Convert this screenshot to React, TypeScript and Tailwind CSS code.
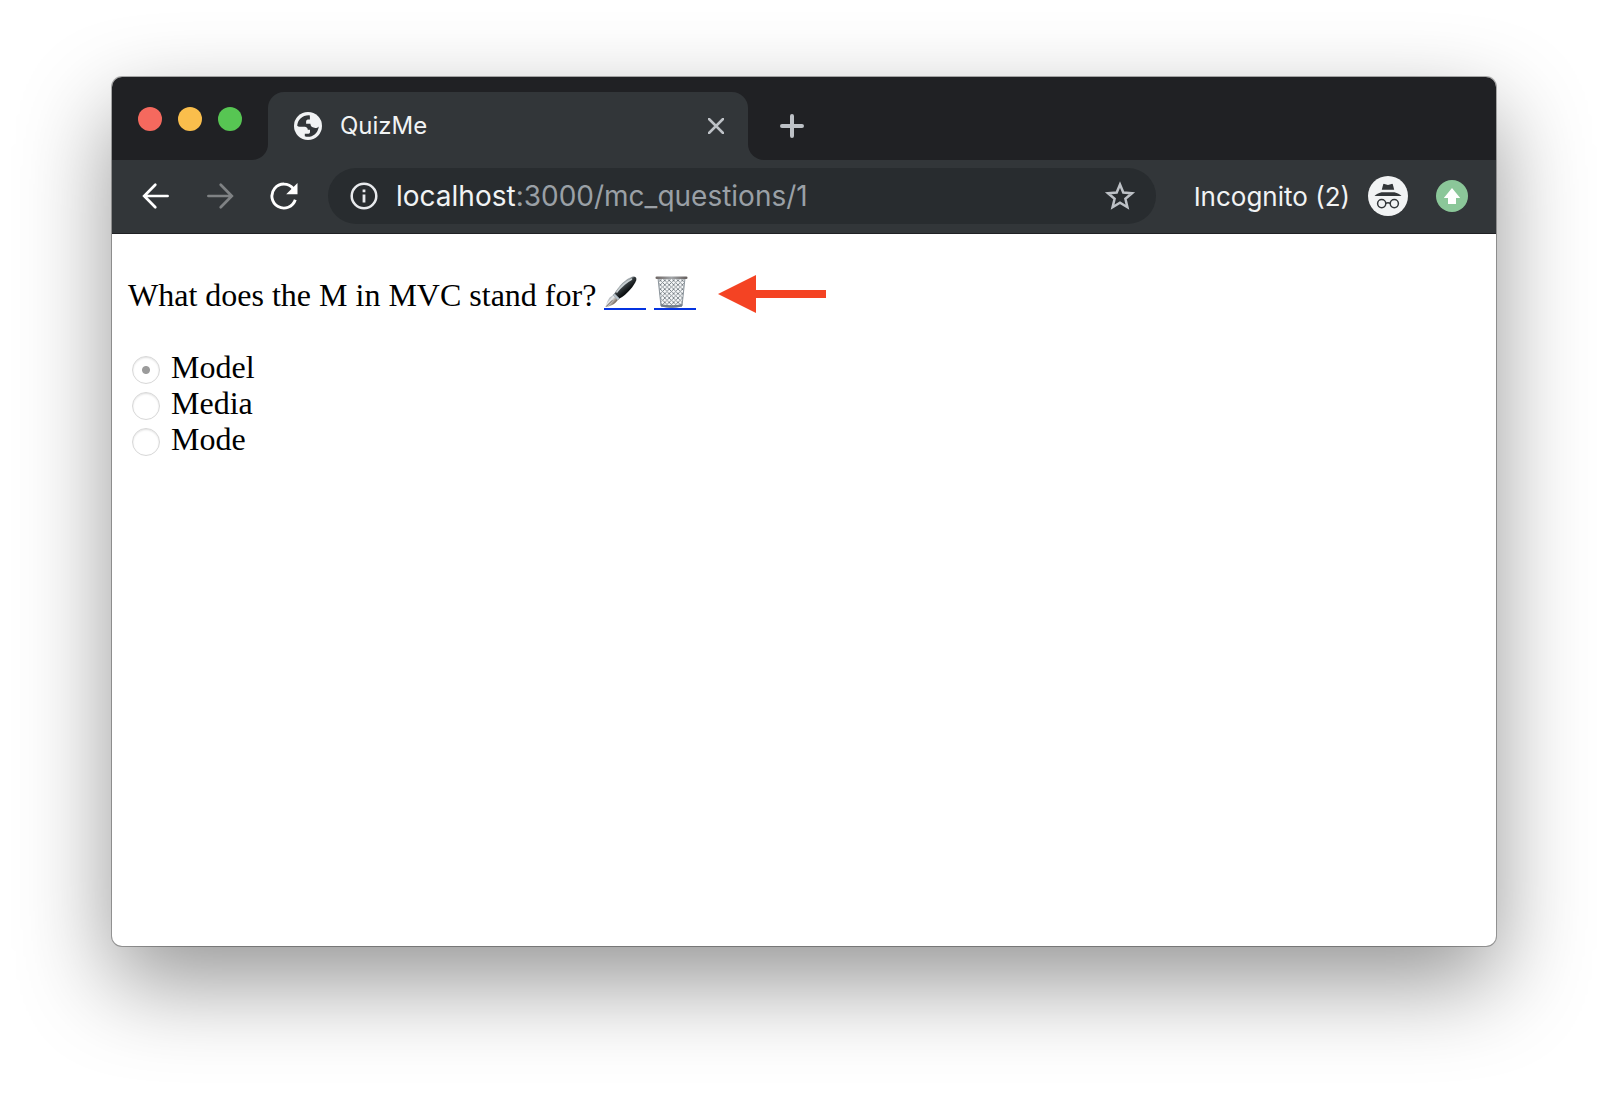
import type { ReactNode } from "react";

const OPTIONS = ["Model", "Media", "Mode"];

function TabFlare({ side }: { side: "left" | "right" }) {
  return (
    <div className="size-4 shrink-0 self-end bg-[#323639]">
      <div className={side === "left" ? "size-4 rounded-br-2xl bg-[#202124]" : "size-4 rounded-bl-2xl bg-[#202124]"} />
    </div>
  );
}

function GlobeIcon() {
  return (
    <svg className="size-7 shrink-0" viewBox="0 0 28 28" aria-hidden="true">
      <circle cx="14" cy="14" r="14" fill="#f1f3f4" />
      <path
        d="M15.700 3.200C9 2.700 3.600 7.300 3.200 13.800c.8.900 2 1.200 3.400.900h4.200c1.700.200 2.900 1.300 3 3h2.200v2.500c-.2 1.100-1.200 1.700-2.700 1.600h-2.500v2.400c5.800 2 13-1.600 14-9.800-1.500 1.700-3.600 1.900-5.300 1.200-2-.7-3.100-2-3.100-3.900h-4.300v-2.200c.1-1.400 1.100-2 2.600-2h1.200V4.700z"
        fill="#323639"
      />
    </svg>
  );
}

function ArrowIcon({ flip = false, color }: { flip?: boolean; color: string }) {
  return (
    <svg className="size-7" viewBox="0 0 28 28" fill="none" stroke={color} strokeWidth="2.700" strokeLinecap="round" aria-hidden="true">
      <path d={flip ? "M2.400 14H25.500M14.700 2.800L25.800 14L14.700 25.200" : "M25.600 14H2.500M13.300 2.800L2.200 14L13.300 25.200"} />
    </svg>
  );
}

function ReloadIcon() {
  return (
    <svg className="size-7" viewBox="0 0 28 28" aria-hidden="true">
      <path d="M23.200 6.500A12 12 0 1 0 25.300 17.800" fill="none" stroke="#fff" strokeWidth="2.900" />
      <path d="M27.500 1v11.300H16.200z" fill="#fff" />
    </svg>
  );
}

function InfoIcon() {
  return (
    <svg className="size-7 shrink-0" viewBox="0 0 28 28" aria-hidden="true">
      <circle cx="14" cy="14" r="12.300" fill="none" stroke="#e8eaed" strokeWidth="2.500" />
      <path d="M12.600 12.600h2.800v8h-2.800zM12.600 7.500h2.800v2.800h-2.800z" fill="#e8eaed" />
    </svg>
  );
}

function StarIcon() {
  return (
    <svg className="size-8" viewBox="0 0 32 32" aria-hidden="true">
      <path
        d="M16 4.500l3.300 8 8.700.700-6.600 5.600 2 8.400L16 22.700l-7.400 4.500 2-8.400L4 13.200l8.700-.700z"
        fill="none"
        stroke="#bdc1c6"
        strokeWidth="2.500"
      />
    </svg>
  );
}

function IncognitoIcon() {
  return (
    <svg className="size-10 shrink-0" viewBox="0 0 40 40" role="img" aria-label="Incognito profile">
      <circle cx="20" cy="20" r="20" fill="#f1f3f4" />
      <g fill="#323639">
        <path d="M15.200 8.300q.300-.700 1.200-.400l3.600 1 3.600-1q.900-.300 1.200.400l1.400 5.500H13.800z" />
        <path d="M13.500 16.300h13c3 .8 5.200 2 7 3.600h-27c1.800-1.600 4-2.800 7-3.600z" />
      </g>
      <g fill="none" stroke="#323639" strokeWidth="1.500">
        <circle cx="13.700" cy="27.600" r="4.100" />
        <circle cx="26.300" cy="27.600" r="4.100" />
        <path d="M17.800 27.300q2.200-1 4.400 0" />
      </g>
    </svg>
  );
}

function UpdateIcon() {
  return (
    <svg className="size-8" viewBox="0 0 32 32" aria-hidden="true">
      <circle cx="16" cy="16" r="16" fill="#8bc799" />
      <path d="M16 8l8.200 10h-4.200v6h-8v-6H7.800z" fill="#fff" />
    </svg>
  );
}

function PenIcon() {
  return (
    <svg className="h-8 w-9" viewBox="0 0 36 32" aria-hidden="true">
      <defs>
        <linearGradient id="pen-body" x1="15" y1="8" x2="22" y2="16" gradientUnits="userSpaceOnUse">
          <stop offset="0" stopColor="#555c61" />
          <stop offset=".25" stopColor="#a9b1b5" />
          <stop offset=".5" stopColor="#33393c" />
          <stop offset="1" stopColor="#0c1012" />
        </linearGradient>
        <linearGradient id="pen-nib" x1="3" y1="22" x2="10" y2="28" gradientUnits="userSpaceOnUse">
          <stop offset="0" stopColor="#6f7780" />
          <stop offset=".45" stopColor="#eceff1" />
          <stop offset="1" stopColor="#75685c" />
        </linearGradient>
      </defs>
      <path d="M10.500 17.500C14 10.500 22.500 2.500 28 .800c3-.900 5 .700 4.200 3.500C30.500 9.500 22.500 19 15.500 22.600z" fill="url(#pen-body)" />
      <path d="M12.500 16.500Q19 7.500 28 3" fill="none" stroke="#c9d0d3" strokeWidth="1.400" />
      <path d="M10.500 17.500l5 5.100-2 1.500-4.600-4.600z" fill="#b8c3cb" stroke="#59636b" strokeWidth=".5" />
      <path d="M8.900 19.500l4.600 4.600c-1.500 3.500-5.500 5.200-10.800 7.100l-1.100-.900c1.400-4.700 3.100-8.800 7.300-10.800z" fill="url(#pen-nib)" />
      <path d="M2 30.700l6.300-6.400" stroke="#534b46" strokeWidth=".8" />
    </svg>
  );
}

function BinIcon() {
  return (
    <svg className="h-8 w-[34px]" viewBox="-2 0 34 32" aria-hidden="true">
      <defs>
        <pattern id="mesh" width="4.400" height="4.400" patternUnits="userSpaceOnUse">
          <path d="M0 0L4.400 4.400M4.400 0L0 4.400" stroke="#747c83" strokeWidth=".85" />
        </pattern>
        <linearGradient id="rim" x1="0" x2="1" y1="0" y2="0">
          <stop offset="0" stopColor="#6d6563" />
          <stop offset=".5" stopColor="#a2a5a8" />
          <stop offset="1" stopColor="#625b59" />
        </linearGradient>
      </defs>
      <path d="M2 2h27l-3 28q-10.500 2.500-21 0z" fill="#f6f8f9" />
      <path d="M2 2h27l-3 28q-10.500 2.500-21 0z" fill="url(#mesh)" stroke="#8b949b" strokeWidth="1" />
      <path d="M4.700 28q10.800 2.500 21.600 0l-.3 2.500q-10.500 2.400-21 0z" fill="#747e88" />
      <rect x="-.5" y=".5" width="32" height="2.600" rx="1.300" fill="url(#rim)" />
    </svg>
  );
}

function EmojiLink({ label, children }: { label: string; children: ReactNode }) {
  return (
    <a href="#" aria-label={label} className="flex w-[42px] border-b-2 border-[#0433e0]">
      {children}
    </a>
  );
}

export default function App() {
  return (
    <main className="flex min-h-screen flex-col bg-white px-28 pt-[77px] pb-[148px]">
      <div className="flex flex-1 flex-col overflow-hidden rounded-[10px] bg-white shadow-[0_0_0_1px_rgba(0,0,0,0.3),0_36px_92px_rgba(0,0,0,0.42)]">
        <header className="font-['Inter',sans-serif]">
          <div className="flex h-[83px] bg-[#202124]">
            <div className="flex gap-4 pt-[30px] pr-2.5 pl-[26px]">
              <button aria-label="Close window" className="size-6 rounded-full bg-[#f5695e]" />
              <button aria-label="Minimize window" className="size-6 rounded-full bg-[#fabe4c]" />
              <button aria-label="Zoom window" className="size-6 rounded-full bg-[#57c653]" />
            </div>
            <TabFlare side="left" />
            <div className="mt-[15px] flex w-[480px] items-center rounded-t-2xl bg-[#323639] pr-6 pl-[26px]">
              <GlobeIcon />
              <span className="ml-[18px] flex-1 text-2xl text-[#f1f3f4]">QuizMe</span>
              <button aria-label="Close tab">
                <svg className="size-4" viewBox="0 0 16 16" stroke="#bdc1c6" strokeWidth="2.500" strokeLinecap="round">
                  <path d="M1 1l14 14M15 1L1 15" />
                </svg>
              </button>
            </div>
            <TabFlare side="right" />
            <button aria-label="New tab" className="mt-[15px] ml-4">
              <svg className="size-6" viewBox="0 0 24 24" stroke="#bdc1c6" strokeWidth="4" strokeLinecap="round">
                <path d="M12 2v20M2 12h20" />
              </svg>
            </button>
          </div>
          <div className="flex h-[74px] items-center border-b border-[#202124] bg-[#323639] pr-7 pb-px pl-[30px]">
            <div className="flex gap-9">
              <button aria-label="Back"><ArrowIcon color="#fff" /></button>
              <button aria-label="Forward" disabled><ArrowIcon flip color="#7f8284" /></button>
              <button aria-label="Reload"><ReloadIcon /></button>
            </div>
            <div className="ml-[30px] flex h-14 flex-1 items-center rounded-full bg-[#282c2f] pr-5 pl-[22px]">
              <InfoIcon />
              <a href="#" className="ml-[18px] flex-1 text-[28px] text-[#9aa0a6]">
                <span className="text-[#f1f3f4]">localhost</span>:3000/mc_questions/1
              </a>
              <button aria-label="Bookmark this page"><StarIcon /></button>
            </div>
            <span className="mr-[18px] ml-[38px] text-[26px] text-[#f1f3f4]">Incognito (2)</span>
            <IncognitoIcon />
            <button aria-label="Update available" className="ml-7"><UpdateIcon /></button>
          </div>
        </header>

        <section className="px-4 pt-9 font-['Liberation_Serif',serif] text-[32px] text-black">
          <div className="flex items-start">
            <p className="leading-[50px]">What does the M in MVC stand for?</p>
            <div className="mt-1.5 ml-2 flex gap-2">
              <EmojiLink label="Edit question"><PenIcon /></EmojiLink>
              <EmojiLink label="Delete question"><BinIcon /></EmojiLink>
            </div>
            <svg className="mt-[5px] ml-[22px] h-[38px] w-[108px]" viewBox="0 0 108 38" aria-hidden="true">
              <path d="M0 19L38 0v15h70v8H38v15z" fill="#f44323" />
            </svg>
          </div>
          <fieldset className="mt-[29px]">
            {OPTIONS.map((option) => (
              <label key={option} className="flex h-9 items-center leading-9">
                <input
                  type="radio"
                  name="answer"
                  disabled
                  defaultChecked={option === "Model"}
                  className="mt-1.5 mr-[11px] ml-1 size-7 appearance-none rounded-full border border-[#d8d8d8] bg-white shadow-[inset_0_1px_2px_rgba(0,0,0,0.12)] checked:bg-[radial-gradient(circle,#9b9b9b_3.500px,transparent_4.500px)]"
                />
                {option}
              </label>
            ))}
          </fieldset>
        </section>
      </div>
    </main>
  );
}
